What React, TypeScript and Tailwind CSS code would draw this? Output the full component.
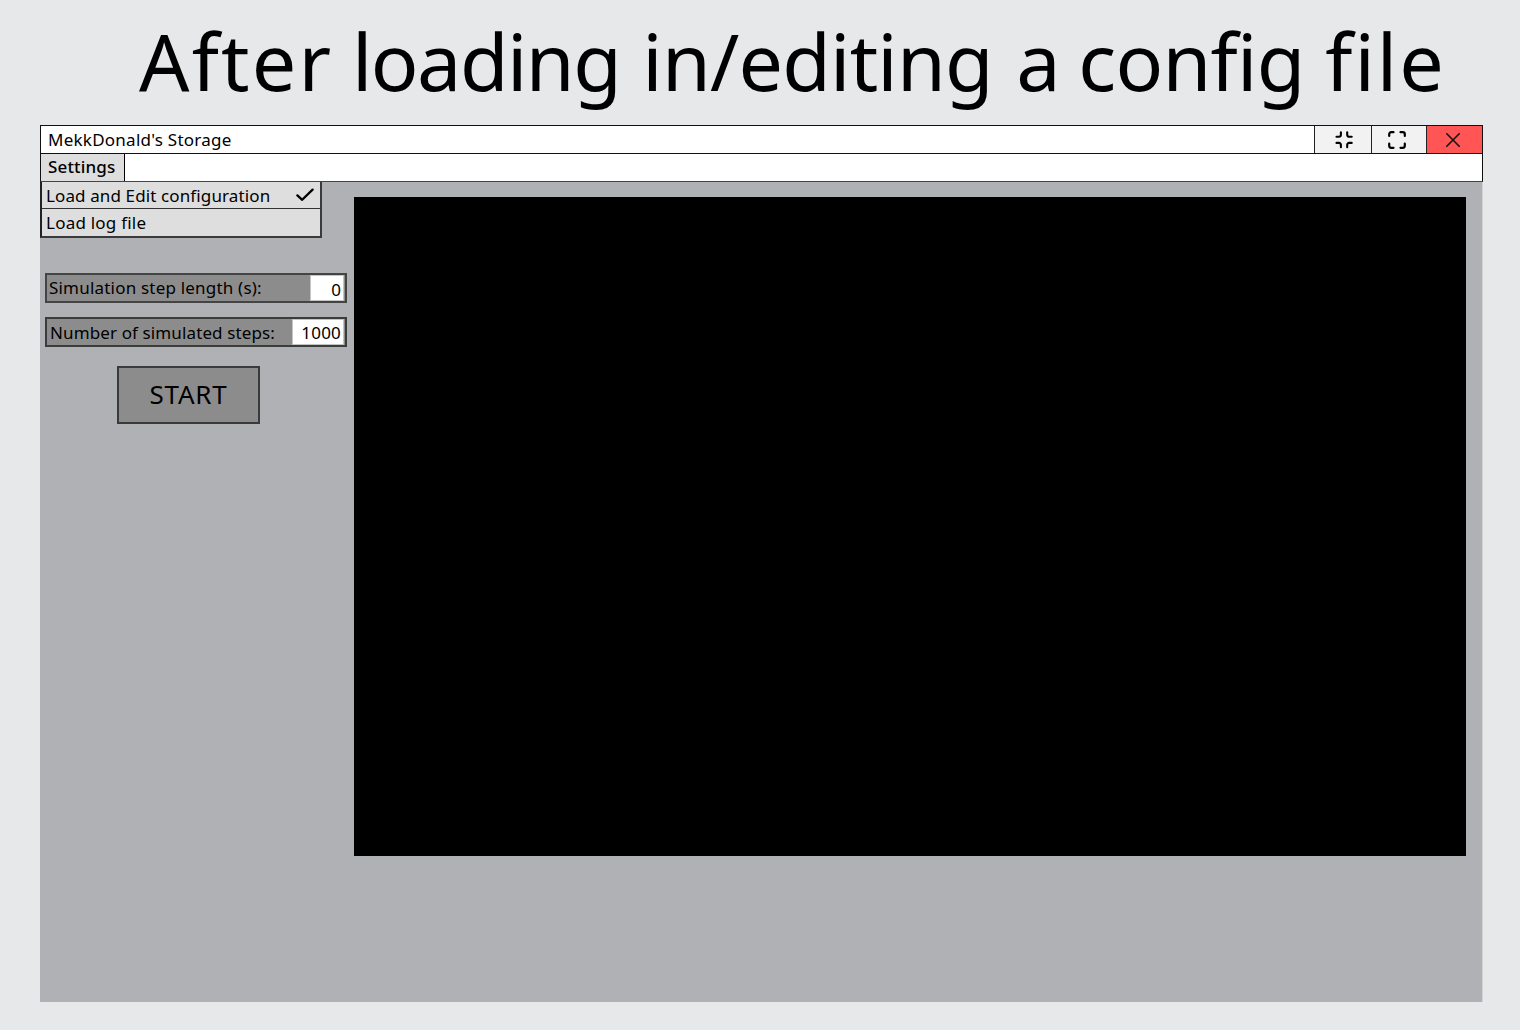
const font = "font-['Noto_Sans',sans-serif]";

function RestoreIcon() {
  return (
    <svg className="h-[18px] w-[18px]" viewBox="0 0 18 18" fill="none" stroke="#000" strokeWidth="2.1" strokeLinecap="round" strokeLinejoin="round">
      <path d="M5.9 1.2v2.6a1.9 1.9 0 0 1-1.9 1.9H1.5M12.2 1.2v2.6a1.9 1.9 0 0 0 1.9 1.9h2.6M1.5 11.9H4a1.9 1.9 0 0 1 1.9 1.9v2.5M16.7 11.9h-2.6a1.9 1.9 0 0 0-1.9 1.9v2.5" />
    </svg>
  );
}

function MaximizeIcon() {
  return (
    <svg className="h-[18px] w-[18px]" viewBox="0 0 18 18" fill="none" stroke="#000" strokeWidth="2.2" strokeLinecap="round" strokeLinejoin="round">
      <path d="M1.2 5V3.2a2 2 0 0 1 2-2h2.3M12.5 1.2h2.3a2 2 0 0 1 2 2V5M1.2 12.7v2.1a2 2 0 0 0 2 2h2.3M12.5 16.8h2.3a2 2 0 0 0 2-2v-2.1" />
    </svg>
  );
}

function CloseIcon() {
  return (
    <svg className="mt-px h-[14px] w-[14px]" viewBox="0 0 14 14" fill="none" stroke="#111" strokeWidth="1.6" strokeLinecap="round">
      <path d="M.8.8l12.4 12.4M13.2.8.8 13.2" />
    </svg>
  );
}

function CheckIcon() {
  return (
    <svg className="h-[14px] w-[18px]" viewBox="0 0 18 14" fill="none" stroke="#000" strokeWidth="2.3" strokeLinecap="round" strokeLinejoin="round">
      <path d="M1.4 7.4l4.8 4.4L16.6 1.6" />
    </svg>
  );
}

export default function App() {
  return (
    <div className={`h-[1030px] w-[1520px] overflow-hidden bg-[#e7e8ea] text-[17px] text-black ${font}`}>
      <h1 className="h-[125px] pl-[139px] text-[79px] leading-[122px] whitespace-nowrap">
        <span className="mr-[-2px] tracking-[2.2px]">After</span>{" "}
        <span className="mr-[1.5px] tracking-[-1.5px]">loading</span>{" "}
        <span className="mr-[3px] tracking-[-0.8px]">in/editing</span>{" "}
        <span className="mr-[-3px]">a</span>{" "}
        <span className="tracking-[-0.7px]">config</span>{" "}
        <span className="tracking-[2px]">file</span>
      </h1>
      <div className="ml-[40px] flex h-[877px] w-[1443px] flex-col border-r border-[#d3d4d6] bg-[#b0b1b5]">
        <div className="mr-[-1px] flex h-[29px] shrink-0 border border-[#111] bg-white">
          <div className="flex-1 pl-[7px] leading-[27px] tracking-[0.25px]"><span>MekkDonald's Storage</span></div>
          <div className="flex w-[57px] items-center justify-center border-l border-[#222] bg-[#f2f2f2] pl-[2px]"><RestoreIcon /></div>
          <div className="flex w-[55px] items-center justify-center border-l border-[#222] bg-[#f2f2f2] pr-[4px]"><MaximizeIcon /></div>
          <div className="flex w-[56px] items-center justify-center border-l border-[#222] bg-[#ff5555] pr-[3px]"><CloseIcon /></div>
        </div>
        <div className="mr-[-1px] flex h-[28px] shrink-0 border border-t-0 border-[#111] border-b-[#444] bg-white">
          <div className="w-[84px] border-r border-black bg-[#dedede] pl-[7px] leading-[26px] font-medium tracking-[0.15px]"><span>Settings</span></div>
        </div>
        <div className="flex">
          <div className="w-[314px]">
            <div className="h-[56px] w-[282px] border-2 border-t-0 border-[#3a3a3a] border-l-[#222] bg-[#dedede]">
              <div className="flex h-[27px] items-center justify-between border-b border-[#333] pr-[6px] pl-[4px]"><span className="pt-px tracking-[0.12px]">Load and Edit configuration</span><CheckIcon /></div>
              <div className="pl-[4px] leading-[27px] tracking-[0.22px]"><span>Load log file</span></div>
            </div>
            <div className="mt-[35px] ml-[5px] flex h-[30px] w-[302px] justify-between border-2 border-[#444] bg-[#8c8c8c] pr-px pl-[2px]">
              <span className="leading-[26px] tracking-[0.2px]">Simulation step length (s):</span>
              <span className="h-[26px] w-[34px] border border-[#c4c4c4] bg-white pr-[2px] text-right leading-[27px]">0</span>
            </div>
            <div className="mt-[14px] ml-[5px] flex h-[30px] w-[302px] justify-between border-2 border-[#3a3d3a] bg-[#8c8c8c] pr-px pl-[3px]">
              <span className="leading-[28px] tracking-[0.12px]">Number of simulated steps:</span>
              <span className="h-[26px] w-[52px] border border-[#c4c4c4] bg-white pr-[2px] text-right leading-[26px] tracking-[0.2px]">1000</span>
            </div>
            <button className="mt-[19px] ml-[77px] flex h-[58px] w-[143px] items-center justify-center border-2 border-[#3a3a3a] bg-[#8c8c8c] pb-[2px] text-[26px] tracking-[0.8px]"><span>START</span></button>
          </div>
          <div className="mt-[15px] h-[659px] w-[1112px] bg-black" />
        </div>
      </div>
    </div>
  );
}
